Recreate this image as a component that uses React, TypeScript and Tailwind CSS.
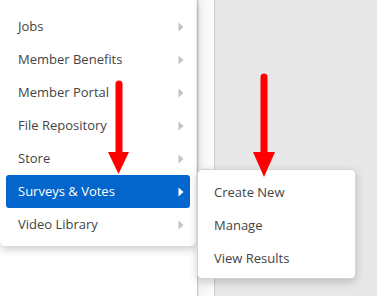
import { ReactNode } from "react";

const menu = [
    "Jobs",
    "Member Benefits",
    "Member Portal",
    "File Repository",
    "Store",
    "Surveys & Votes",
    "Video Library",
];

const sub = ["Create New", "Manage", "View Results"];

function Caret({ white }: { white?: boolean }) {
    return (
        <svg width="6" height="10" viewBox="0 0 6 10" className="shrink-0">
            <path d="M0.5 0.5 L5.5 5 L0.5 9.5 Z" fill={white ? "#ffffff" : "#c4c4c4"} />
        </svg>
    );
}

function Arrow({ x, top, bottom }: { x: number; top: number; bottom: number }) {
    // red hand-drawn pointer arrow
    return (
        <path
            d={`M${x} ${top} L${x} ${bottom - 20}`}
            stroke="#ff0000"
            strokeWidth="7"
            strokeLinecap="round"
            fill="none"
        />
    );
}

function Row({ children, active }: { children: ReactNode; active?: boolean }) {
    return (
        <div
            className={
                "flex h-[33px] items-center justify-between rounded-[3px] pl-[12px] pr-[6px] text-[13px] " +
                (active ? "bg-[#0366cc] text-white" : "text-[#444444]")
            }
        >
            <span>{children}</span>
            <Caret white={active} />
        </div>
    );
}

export default function App() {
    return (
        <main
            className="relative flex h-[296px] w-[377px] overflow-hidden bg-white"
            style={{ fontFamily: '"Open Sans", "Noto Sans", sans-serif' }}
        >
            {/* page behind the menus */}
            <section className="w-[197px] shrink-0 bg-white" />
            <section className="w-[2px] shrink-0 border-l border-[#d0d0d0] bg-[#e2e2e2]" />
            <section className="w-[16px] shrink-0 border-r border-[#cccccc] bg-gradient-to-r from-[#f4f4f4] to-[#fdfdfd]" />
            <section className="flex-1 bg-[#e8e8e8]" />

            {/* main dropdown */}
            <div className="absolute left-0 top-0 w-[196px] rounded-b-[5px] bg-white px-[6px] pb-[5px] pt-[10px] shadow-[0_3px_10px_rgba(0,0,0,0.22)]">
                {menu.map((m) => (
                    <Row key={m} active={m === "Surveys & Votes"}>
                        {m}
                    </Row>
                ))}
            </div>

            {/* flyout */}
            <div className="absolute left-[197px] top-[169px] w-[159px] rounded-[5px] border border-[#d4d4d4] bg-white pb-[3px] pt-[6px] shadow-[0_3px_10px_rgba(0,0,0,0.2)]">
                {sub.map((s) => (
                    <div key={s} className="flex h-[33px] items-center pl-[16px] text-[13px] text-[#444444]">
                        {s}
                    </div>
                ))}
            </div>

            {/* annotation arrows */}
            <svg className="pointer-events-none absolute left-0 top-0" width="377" height="296">
                <Arrow x={119} top={84} bottom={172} />
                <path d="M108 152 L129 152 L118.5 174 Z" fill="#ff0000" />
                <Arrow x={264} top={77} bottom={172} />
                <path d="M253 152 L275 152 L264 177 Z" fill="#ff0000" />
            </svg>
        </main>
    );
}
